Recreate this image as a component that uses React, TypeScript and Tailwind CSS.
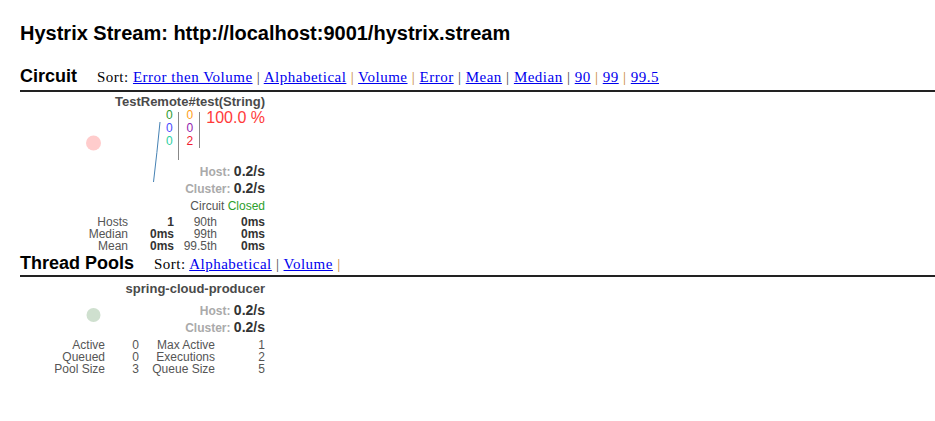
const sans = { fontFamily: '"Liberation Sans", Arial, sans-serif' };

type Sep = 'd' | 'o';

function SortBar({ items, seps, trailing }: { items: string[]; seps: Sep[]; trailing?: Sep }) {
  return (
    <span className="font-['Liberation_Serif',serif] text-[15px] tracking-[0.5px] text-black">
      Sort:{' '}
      {items.map((it, i) => (
        <span key={it}>
          <a href="#" className="text-[#0000ee] underline">
            {it}
          </a>
          {i < items.length - 1 && (
            <span className={seps[i] === 'o' ? 'text-[#c8862f]' : 'text-[#444]'}> | </span>
          )}
        </span>
      ))}
      {trailing && <span className={trailing === 'o' ? 'text-[#c8862f]' : 'text-[#444]'}> |</span>}
    </span>
  );
}

function Rate({ label, value }: { label: string; value: string }) {
  return (
    <div className="flex h-[17px] items-baseline justify-end">
      <span className="text-[12px] leading-[17px] font-bold text-[#aaa]">{label}:&nbsp;</span>
      <span className="text-[14px] leading-[17px] font-bold text-[#333]">{value}</span>
    </div>
  );
}

export default function App() {
  return (
    <div className="min-h-[421px] bg-white pl-5 pt-[21px]" style={sans}>
      {/* Title */}
      <h1 className="text-[20px] leading-[24px] font-bold text-black">
        Hystrix Stream: http://localhost:9001/hystrix.stream
      </h1>

      {/* Circuit header */}
      <div className="mt-[20px] flex items-baseline gap-[20px] border-b-2 border-[#222] pb-px">
        <h2 className="text-[18px] leading-[22px] font-bold text-black">Circuit</h2>
        <SortBar
          items={['Error then Volume', 'Alphabetical', 'Volume', 'Error', 'Mean', 'Median', '90', '99', '99.5']}
          seps={['d', 'o', 'o', 'd', 'd', 'd', 'o', 'o']}
        />
      </div>

      {/* Circuit panel */}
      <div className="relative mt-[3px] flex w-[245px] flex-col items-end text-right">
        <svg className="absolute left-0 top-0" width="245" height="120" viewBox="0 0 245 120">
          <circle cx="73.5" cy="48" r="7.5" fill="#ffcccc" />
          <path d="M140 27 Q137 58 133.5 87" stroke="#4682b4" strokeWidth="1" fill="none" />
        </svg>
        <div className="text-[13px] leading-[14px] font-bold text-[#4a4a4a]">TestRemote#test(String)</div>
        <div className="flex h-[52px] items-start text-[12px] leading-[13px]">
          <div className="flex flex-col pr-[5px]">
            <span className="text-[#2e9a2e]">0</span>
            <span className="text-[#4a4aff]">0</span>
            <span className="text-[#2ccf9f]">0</span>
          </div>
          <div className="mt-[3px] h-[48px] w-px bg-[#888]" />
          <div className="flex flex-col pl-[8px] pr-[6px]">
            <span className="text-[#ff9e20]">0</span>
            <span className="text-[#9322ae]">0</span>
            <span className="text-[#f01a30]">2</span>
          </div>
          <div className="mt-[3px] h-[36px] w-px bg-[#888]" />
          <div className="pl-[6px] text-[16px] leading-[18px] text-[#ff3a3a]">100.0 %</div>
        </div>
        <div className="mt-[2px]">
          <Rate label="Host" value="0.2/s" />
          <Rate label="Cluster" value="0.2/s" />
        </div>
        <div className="pt-px text-[12px] leading-[17px] text-[#555]">
          Circuit <span className="text-[#2ca02c]">Closed</span>
        </div>
        <div className="mt-px grid w-[245px] grid-cols-[108px_46px_43px_48px] text-[12px] leading-[12px] text-[#555]">
          <span>Hosts</span>
          <span className="font-bold text-[#333]">1</span>
          <span>90th</span>
          <span className="font-bold text-[#333]">0ms</span>
          <span>Median</span>
          <span className="font-bold text-[#333]">0ms</span>
          <span>99th</span>
          <span className="font-bold text-[#333]">0ms</span>
          <span>Mean</span>
          <span className="font-bold text-[#333]">0ms</span>
          <span>99.5th</span>
          <span className="font-bold text-[#333]">0ms</span>
        </div>
      </div>

      {/* Thread Pools header */}
      <div className="flex items-baseline gap-[20px] border-b-2 border-[#222]">
        <h2 className="text-[18px] leading-[22px] font-bold text-black">Thread Pools</h2>
        <SortBar items={['Alphabetical', 'Volume']} seps={['d']} trailing="o" />
      </div>

      {/* Thread pool panel */}
      <div className="relative mt-[5px] flex w-[245px] flex-col items-end text-right">
        <svg className="absolute left-0 top-0" width="245" height="60" viewBox="0 0 245 60">
          <circle cx="73.5" cy="33" r="7" fill="#cfe0cf" />
        </svg>
        <div className="text-[13px] leading-[14px] font-bold text-[#4a4a4a]">spring-cloud-producer</div>
        <div className="mt-[6px]">
          <Rate label="Host" value="0.2/s" />
          <Rate label="Cluster" value="0.2/s" />
        </div>
        <div className="mt-[3px] grid w-[245px] grid-cols-[85px_34px_76px_50px] text-[12px] leading-[12px] text-[#555]">
          <span>Active</span>
          <span>0</span>
          <span>Max Active</span>
          <span>1</span>
          <span>Queued</span>
          <span>0</span>
          <span>Executions</span>
          <span>2</span>
          <span>Pool Size</span>
          <span>3</span>
          <span>Queue Size</span>
          <span>5</span>
        </div>
      </div>
    </div>
  );
}
